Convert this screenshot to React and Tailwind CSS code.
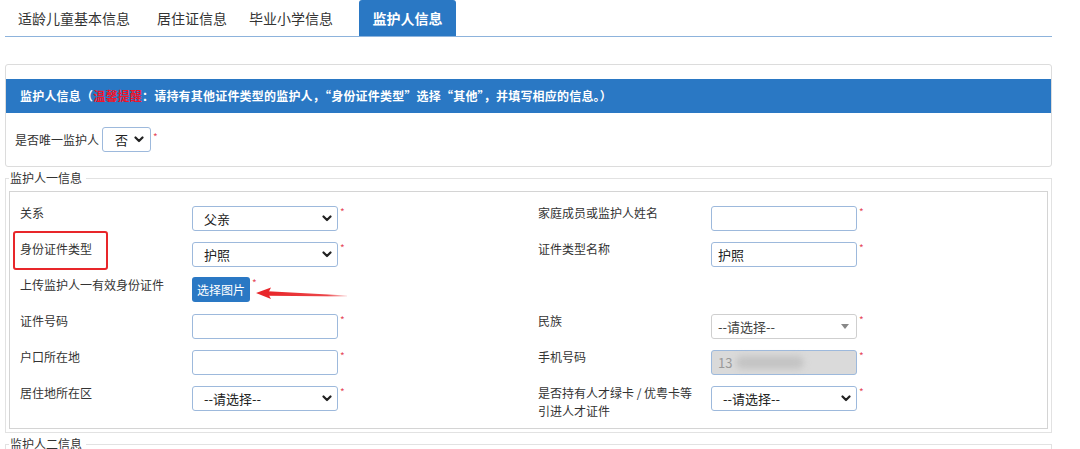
import React from 'react';

const font = { fontFamily: '"Noto Sans CJK SC", "Noto Sans", "Liberation Sans", sans-serif' };

function Chevron() {
  return (
    <svg width="10" height="7" viewBox="0 0 10 7" className="shrink-0">
      <path d="M1.5 1.5 L5 5 L8.5 1.5" fill="none" stroke="#222" strokeWidth="2.2" strokeLinecap="round" strokeLinejoin="round" />
    </svg>
  );
}

function Star() {
  return <span className="ml-[2px] -mt-[1px] self-start text-[10px] leading-[14px] text-[#e64a5a]">*</span>;
}

function SelectBox({ value }) {
  return (
    <div className="flex items-start">
      <div className="flex h-[25px] w-[146px] items-center justify-between rounded-[3px] border border-[#9db9dc] bg-white pl-[11px] pr-[5px] text-[13px] text-[#222]">
        <span>{value}</span>
        <Chevron />
      </div>
      <Star />
    </div>
  );
}

function InputBox({ value, disabled }) {
  return (
    <div className="flex items-start">
      <div
        className={
          'flex h-[25px] w-[146px] items-center rounded-[3px] border border-[#9db9dc] px-[6px] text-[13px] ' +
          (disabled ? 'bg-[#dadada] text-[#999]' : 'bg-white text-[#222]')
        }
      >
        {value}
      </div>
      <Star />
    </div>
  );
}

function Label({ children }) {
  return <div className="text-[12px] leading-[18px] text-[#333]">{children}</div>;
}

function Row({ children }) {
  return <div className="contents">{children}</div>;
}

export default function App() {
  const tabs = ['适龄儿童基本信息', '居住证信息', '毕业小学信息', '监护人信息'];

  return (
    <div className="relative h-[449px] w-[1080px] overflow-hidden bg-white" style={font}>
      <div className="ml-[5px] w-[1047px]">
        {/* tabs */}
        <div className="flex h-[37px] border-b border-[#8db3dc]">
          {tabs.map((t, i) =>
            i === 3 ? (
              <div key={t} className="ml-[12px] flex h-[36px] w-[97px] items-center justify-center rounded-t-[3px] bg-[#2a78c4] text-[14px] font-bold text-white">
                {t}
              </div>
            ) : (
              <div key={t} className={'flex h-[36px] items-center text-[14px] text-[#333] ' + (i === 0 ? 'pl-[13px] pr-[27px]' : i === 1 ? 'pr-[22px]' : 'pr-[14px]')}>
                {t}
              </div>
            )
          )}
        </div>

        {/* top panel */}
        <div className="mt-[27px] h-[103px] rounded-[3px] border border-[#dcdcdc] pt-[14px]">
          <div className="flex h-[34px] items-center bg-[#2a78c4] pl-[14px] text-[12px] font-bold tracking-[0.2px] text-white">
            监护人信息（<span className="text-[#f0142a]">温馨提醒</span>：请持有其他证件类型的监护人，“身份证件类型”选择“其他”，并填写相应的信息。）
          </div>
          <div className="mt-[14px] flex items-center pl-[9px]">
            <span className="mr-[3px] text-[12px] text-[#333]">是否唯一监护人</span>
            <div className="flex h-[25px] w-[49px] items-center justify-between rounded-[3px] border border-[#9db9dc] pl-[12px] pr-[6px] text-[13px] text-[#222]">
              <span>否</span>
              <Chevron />
            </div>
            <span className="ml-[2px] -mt-[6px] text-[10px] text-[#e64a5a]">*</span>
          </div>
        </div>

        {/* guardian one */}
        <fieldset className="mt-[4px] border border-[#e2e2e2] px-[3px] pb-[3px]">
          <legend className="pl-px pr-[4px] text-[12px] leading-[14px] text-[#333]">监护人一信息</legend>
          <div className="mt-[6px] border border-[#d4d4d4] pl-[10px] pt-[12px] pb-[8px]">
            <div className="grid grid-cols-[172px_346px_173px_1fr] auto-rows-[36px]">
              <Row>
                <Label>关系</Label>
                <div className="pt-[2px]"><SelectBox value="父亲" /></div>
                <Label>家庭成员或监护人姓名</Label>
                <div className="pt-[2px]"><InputBox value="" /></div>
              </Row>
              <Row>
                <Label>身份证件类型</Label>
                <div className="pt-[2px]"><SelectBox value="护照" /></div>
                <Label>证件类型名称</Label>
                <div className="pt-[2px]"><InputBox value="护照" /></div>
              </Row>
              <Row>
                <Label>上传监护人一有效身份证件</Label>
                <div className="flex items-start pt-[1px]">
                  <div className="flex h-[25px] w-[58px] items-center justify-center rounded-[3px] bg-[#2a78c4] text-[12px] text-white">选择图片</div>
                  <Star />
                </div>
                <div />
                <div />
              </Row>
              <Row>
                <Label>证件号码</Label>
                <div className="pt-[2px]"><InputBox value="" /></div>
                <Label>民族</Label>
                <div className="flex items-start pt-[2px]">
                  <div className="flex h-[25px] w-[146px] items-center justify-between rounded-[3px] border border-[#cfcfcf] bg-white pl-[6px] pr-[7px] text-[13px] text-[#444]">
                    <span>--请选择--</span>
                    <svg width="8" height="5" viewBox="0 0 8 5"><path d="M0 0 L8 0 L4 5 Z" fill="#888" /></svg>
                  </div>
                  <Star />
                </div>
              </Row>
              <Row>
                <Label>户口所在地</Label>
                <div className="pt-[2px]"><InputBox value="" /></div>
                <Label>手机号码</Label>
                <div className="pt-[2px]">
                  <InputBox
                    disabled
                    value={
                      <>
                        <span>13</span>
                        <span className="ml-[4px] h-[13px] w-[68px] rounded-full bg-[#c4c4c4] blur-[3px]" />
                      </>
                    }
                  />
                </div>
              </Row>
              <Row>
                <Label>居住地所在区</Label>
                <div className="pt-[2px]"><SelectBox value="--请选择--" /></div>
                <Label>
                  是否持有人才绿卡 / 优粤卡等
                  <br />
                  引进人才证件
                </Label>
                <div className="pt-[2px]"><SelectBox value="--请选择--" /></div>
              </Row>
            </div>
          </div>
        </fieldset>

        {/* guardian two */}
        <fieldset className="mt-[4px] h-[40px] border border-[#e2e2e2] px-[3px]">
          <legend className="pl-px pr-[4px] text-[12px] leading-[14px] text-[#333]">监护人二信息</legend>
        </fieldset>
      </div>

      {/* annotations */}
      <div className="absolute left-[13px] top-[231px] h-[39px] w-[95px] rounded-[3px] border-2 border-[#e8262a]" />
      <svg className="absolute left-[254px] top-[285px]" width="96" height="16" viewBox="0 0 96 16">
        <defs>
          <linearGradient id="tail" x1="0" x2="1" y1="0" y2="0">
            <stop offset="0" stopColor="#e8262a" />
            <stop offset="0.75" stopColor="#e8262a" stopOpacity="0.85" />
            <stop offset="1" stopColor="#e8262a" stopOpacity="0.15" />
          </linearGradient>
        </defs>
        <path d="M14 6.2 L93 10.4 L93 11.4 L14 10.8 Z" fill="url(#tail)" />
        <path d="M2 8 L17 2.5 L14 8.4 L17 14 Z" fill="#e8262a" />
      </svg>
    </div>
  );
}
